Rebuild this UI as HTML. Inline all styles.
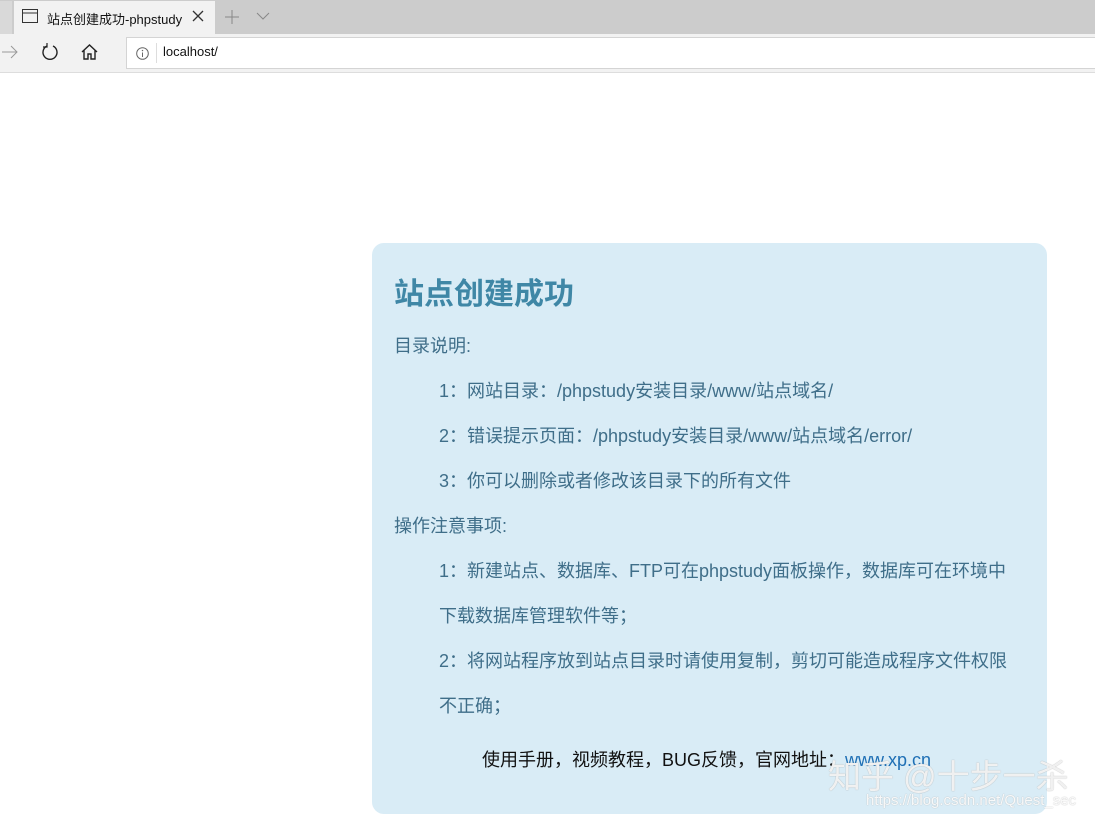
<!DOCTYPE html>
<html><head><meta charset="utf-8"><style>
*{margin:0;padding:0;box-sizing:border-box}
body{width:1095px;height:820px;background:#fff;position:relative;overflow:hidden;font-family:"Liberation Sans","Noto Sans CJK SC",sans-serif}
.tabbar{position:absolute;left:0;top:0;width:1095px;height:34px;background:#cccccc}
.tab{position:absolute;left:14px;top:1px;width:201px;height:33px;background:#f2f2f2}
.tab0{position:absolute;left:0;top:1px;width:12px;height:33px;background:#d9d9d9}
.toolbar{position:absolute;left:0;top:34px;width:1095px;height:39px;background:#f2f2f2;border-bottom:1px solid #ddd}
.addr{position:absolute;left:126px;top:3px;width:980px;height:32px;background:#fff;border:1px solid #d4d4d4}
.t{position:absolute;white-space:nowrap}
.box{position:absolute;left:372px;top:243px;width:675px;height:571px;background:#d9ecf6;border-radius:12px}
.l{position:absolute;font-size:18px;color:#3f6e89;white-space:nowrap;line-height:24px}
</style></head><body>
<div class="tabbar">
<div class="tab0"></div>
<div class="tab">
<svg style="position:absolute;left:8px;top:8px" width="16" height="14"><rect x="0.5" y="0.5" width="15" height="13" fill="none" stroke="#333"/><line x1="0" y1="4" x2="16" y2="4" stroke="#333"/></svg>
<div class="t" style="left:33px;top:8px;font-size:13px;color:#111;width:138px;overflow:hidden">站点创建成功-phpstudy</div>
<svg style="position:absolute;left:178px;top:9px" width="12" height="12"><path d="M1 1L11 11M11 1L1 11" stroke="#333" stroke-width="1.3"/></svg>
</div>
<svg style="position:absolute;left:224px;top:9px" width="16" height="16"><path d="M8 1V15M1 8H15" stroke="#888" stroke-width="1"/></svg>
<svg style="position:absolute;left:256px;top:12px" width="14" height="9"><path d="M1 1L7 7L13 1" stroke="#888" fill="none"/></svg>
</div>
<div class="toolbar">
<svg style="position:absolute;left:2px;top:11px" width="16" height="14"><path d="M0 7H15M9 1L15 7L9 13" stroke="#999" fill="none"/></svg>
<svg style="position:absolute;left:41px;top:9px" width="18" height="18"><path d="M6 3A7 7 0 1 0 12 3" stroke="#222" fill="none" stroke-width="1.4"/><path d="M6 0V4H2" stroke="#222" fill="none" stroke-width="1.2"/></svg>
<svg style="position:absolute;left:81px;top:10px" width="17" height="16"><path d="M1 8L8.5 1L16 8M3 6V15H7V10H10V15H14V6" stroke="#222" fill="none" stroke-width="1.4"/></svg>
<div class="addr">
<svg style="position:absolute;left:9px;top:9px" width="13" height="13"><circle cx="6.5" cy="6.5" r="5.8" stroke="#666" fill="none"/><line x1="6.5" y1="5.5" x2="6.5" y2="10" stroke="#666"/><circle cx="6.5" cy="3.6" r="0.7" fill="#666"/></svg>
<div style="position:absolute;left:29px;top:5px;width:1px;height:20px;background:#ddd"></div>
<div class="t" style="left:36px;top:6px;font-size:13px;color:#111">localhost/</div>
</div>
</div>
<div class="box">
<div class="t" style="left:22px;top:26px;font-size:30px;font-weight:bold;color:#3f87a6">站点创建成功</div>
<div class="l" style="left:22px;top:91px">目录说明:</div>
<div class="l" style="left:67px;top:136px">1：网站目录：/phpstudy安装目录/www/站点域名/</div>
<div class="l" style="left:67px;top:181px">2：错误提示页面：/phpstudy安装目录/www/站点域名/error/</div>
<div class="l" style="left:67px;top:226px">3：你可以删除或者修改该目录下的所有文件</div>
<div class="l" style="left:22px;top:271px">操作注意事项:</div>
<div class="l" style="left:67px;top:316px">1：新建站点、数据库、FTP可在phpstudy面板操作，数据库可在环境中</div>
<div class="l" style="left:67px;top:361px">下载数据库管理软件等；</div>
<div class="l" style="left:67px;top:406px">2：将网站程序放到站点目录时请使用复制，剪切可能造成程序文件权限</div>
<div class="l" style="left:67px;top:451px">不正确；</div>
<div class="l" style="left:110px;top:505px;color:#111">使用手册，视频教程，BUG反馈，官网地址：<span style="color:#1e6fb5">www.xp.cn</span></div>
</div>
<div class="t" style="left:828px;top:750px;font-size:33px;color:rgba(255,255,255,0.85);text-shadow:0 0 1px #999">知乎 @十步一杀</div>
<div class="t" style="left:866px;top:792px;font-size:15px;color:rgba(255,255,255,0.9);text-shadow:0 0 1px #aaa">https://blog.csdn.net/Quest_sec</div>
</body></html>
